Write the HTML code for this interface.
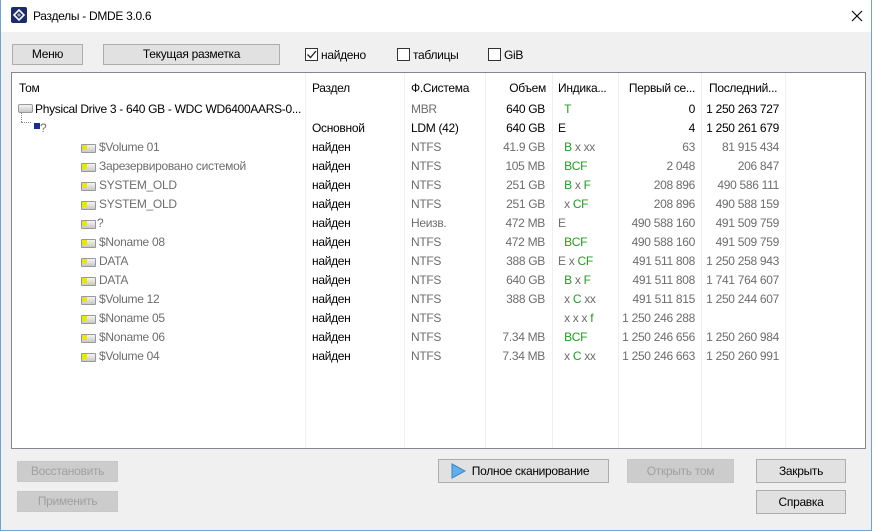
<!DOCTYPE html>
<html><head><meta charset="utf-8"><style>
*{margin:0;padding:0;box-sizing:border-box}
body{width:875px;height:531px;overflow:hidden;background:#fff;font-family:"Liberation Sans",sans-serif;font-size:12px;color:#000;position:relative;letter-spacing:-0.3px}
.win{position:absolute;left:0;top:0;width:872px;height:531px;border:1px solid #6ea3d8;border-top:none;background:#f0f0f0}
.title{position:absolute;left:0;top:0;width:870px;height:32px;background:#fff}
.a{position:absolute;white-space:nowrap}
.btn{position:absolute;border:1px solid #adadad;background:#e1e1e1;text-align:center;font-size:12px}
.dis{color:#a0a0a0;border-color:#c8c8c8;background:#cccccc}
.cb{position:absolute;width:13px;height:13px;border:1px solid #333;background:#fff}
.list{position:absolute;left:10px;top:72px;width:855px;height:377px;background:#fff;border:1px solid #828790}
.sep{position:absolute;top:0;width:1px;height:375px;background:#f0f0f0}
.g{color:#6d6d6d}.gr{color:#1f9e1f}
.r{text-align:right}
.ic{position:absolute;width:15px;height:9px;border:1px solid #999;background:linear-gradient(#f4f4f4,#c8c8c8);border-radius:1px}
.ic i{position:absolute;left:0;top:0;width:5px;height:5px;background:#e8e800}
</style></head><body>
<div class="win">
<div class="title">
<div class="a" style="left:10px;top:7px;width:16px;height:16px;background:#1c2a6e;border-radius:2px"><svg width="16" height="16"><path d="M8 3 L13 8 L8 13 L3 8Z" fill="none" stroke="#fff" stroke-width="1.6"/><path d="M8 6 L10 8 L8 10 L6 8Z" fill="#9ab"/></svg></div>
<div class="a" style="left:32px;top:9px;font-size:12px">Разделы - DMDE 3.0.6</div>
<svg class="a" style="left:850px;top:10px" width="12" height="12"><path d="M1 1 L11 11 M11 1 L1 11" stroke="#000" stroke-width="1.1"/></svg>
</div>
<div class="btn" style="left:11px;top:44px;width:71px;height:21px;line-height:19px">Меню</div>
<div class="btn" style="left:102px;top:44px;width:177px;height:21px;line-height:19px">Текущая разметка</div>
<div class="cb" style="left:304px;top:48px"><svg width="11" height="11" style="position:absolute;left:0;top:0"><path d="M1.5 5.5 L4.5 8.5 L10 2" fill="none" stroke="#222" stroke-width="1.3"/></svg></div>
<div class="a" style="left:320px;top:48px">найдено</div>
<div class="cb" style="left:396px;top:48px"></div><div class="a" style="left:412px;top:48px">таблицы</div>
<div class="cb" style="left:487px;top:48px"></div><div class="a" style="left:503px;top:48px">GiB</div>

<div class="list">
<div class="sep" style="left:293px"></div><div class="sep" style="left:392px"></div><div class="sep" style="left:473px"></div><div class="sep" style="left:540px"></div><div class="sep" style="left:606px"></div><div class="sep" style="left:689px"></div><div class="sep" style="left:773px"></div>
</div>
<div id="rows"></div>
<div class="a" style="left:18px;top:81px">Том</div>
<div class="a" style="left:311px;top:81px">Раздел</div>
<div class="a" style="left:410px;top:81px">Ф.Система</div>
<div class="a r" style="left:480px;top:81px;width:65px">Объем</div>
<div class="a" style="left:557px;top:81px">Индика...</div>
<div class="a r" style="left:620px;top:81px;width:74px">Первый се...</div>
<div class="a" style="left:708px;top:81px">Последний...</div>

<div class="ic" style="left:17px;top:104px;border-radius:2px"></div>
<div class="a" style="left:20px;top:113px;width:1px;height:9px;border-left:1px dotted #888"></div>
<div class="a" style="left:20px;top:122px;width:10px;height:1px;border-top:1px dotted #888"></div>
<div class="a" style="left:33px;top:123px;width:6px;height:6px;background:#1a2a8e"></div>
<div class="a g" style="left:39px;top:121px">?</div>
</div>
<script>
var R=[
["Physical Drive 3 - 640 GB - WDC WD6400AARS-0...","","MBR","640 GB",'&nbsp;&nbsp;<span class="gr">T</span>',"0","1 250 263 727",0],
["","Основной","LDM (42)","640 GB","E","4","1 250 261 679",1],
["$Volume 01","найден","NTFS","41.9 GB",'&nbsp;&nbsp;<span class="gr">B</span> x xx',"63","81 915 434",2],
["Зарезервировано системой","найден","NTFS","105 MB",'&nbsp;&nbsp;<span class="gr">BCF</span>',"2 048","206 847",2],
["SYSTEM_OLD","найден","NTFS","251 GB",'&nbsp;&nbsp;<span class="gr">B</span> x <span class="gr">F</span>',"208 896","490 586 111",2],
["SYSTEM_OLD","найден","NTFS","251 GB",'&nbsp;&nbsp;x <span class="gr">CF</span>',"208 896","490 588 159",2],
["?","найден","Неизв.","472 MB","E","490 588 160","491 509 759",2],
["$Noname 08","найден","NTFS","472 MB",'&nbsp;&nbsp;<span class="gr">BCF</span>',"490 588 160","491 509 759",2],
["DATA","найден","NTFS","388 GB",'E x <span class="gr">CF</span>',"491 511 808","1 250 258 943",2],
["DATA","найден","NTFS","640 GB",'&nbsp;&nbsp;<span class="gr">B</span> x <span class="gr">F</span>',"491 511 808","1 741 764 607",2],
["$Volume 12","найден","NTFS","388 GB",'&nbsp;&nbsp;x <span class="gr">C</span> xx',"491 511 815","1 250 244 607",2],
["$Noname 05","найден","NTFS","",'&nbsp;&nbsp;x x x <span class="gr">f</span>',"1 250 246 288","",2],
["$Noname 06","найден","NTFS","7.34 MB",'&nbsp;&nbsp;<span class="gr">BCF</span>',"1 250 246 656","1 250 260 984",2],
["$Volume 04","найден","NTFS","7.34 MB",'&nbsp;&nbsp;x <span class="gr">C</span> xx',"1 250 246 663","1 250 260 991",2]];
var h='';
R.forEach(function(r,i){var y=102+i*19;var c=r[7]==2?'g':'';
if(r[7]==0)h+='<div class="a" style="left:34px;top:'+y+'px">'+r[0]+'</div>';
if(r[7]==2){h+='<div class="ic" style="left:80px;top:'+(y+4)+'px"><i></i></div>';h+='<div class="a g" style="left:'+(r[0]=="?"?96:98)+'px;top:'+y+'px">'+r[0]+'</div>';}
h+='<div class="a" style="left:311px;top:'+y+'px">'+r[1]+'</div>';
h+='<div class="a '+(r[7]==1?'':'g')+'" style="left:410px;top:'+y+'px">'+r[2]+'</div>';
h+='<div class="a r '+c+'" style="left:480px;top:'+y+'px;width:64px">'+r[3]+'</div>';
h+='<div class="a '+(r[7]==1?'':'g')+'" style="left:557px;top:'+y+'px">'+r[4]+'</div>';
h+='<div class="a r '+c+'" style="left:600px;top:'+y+'px;width:94px">'+r[5]+'</div>';
h+='<div class="a r '+c+'" style="left:690px;top:'+y+'px;width:88px">'+r[6]+'</div>';});
document.getElementById('rows').innerHTML=h;
</script>
<div class="btn dis" style="left:17px;top:461px;width:101px;height:21px;line-height:19px">Восстановить</div>
<div class="btn dis" style="left:17px;top:491px;width:101px;height:21px;line-height:19px">Применить</div>
<div class="btn" style="left:438px;top:459px;width:171px;height:24px;line-height:22px;padding-left:14px">Полное сканирование</div>
<svg class="a" style="left:450px;top:463px" width="16" height="16"><path d="M2 1 L15 8 L2 15Z" fill="#5fb0e8" stroke="#3a86c8"/></svg>
<div class="btn dis" style="left:627px;top:459px;width:107px;height:24px;line-height:22px">Открыть том</div>
<div class="btn" style="left:756px;top:459px;width:90px;height:24px;line-height:22px">Закрыть</div>
<div class="btn" style="left:756px;top:490px;width:90px;height:24px;line-height:22px">Справка</div>
</body></html>
